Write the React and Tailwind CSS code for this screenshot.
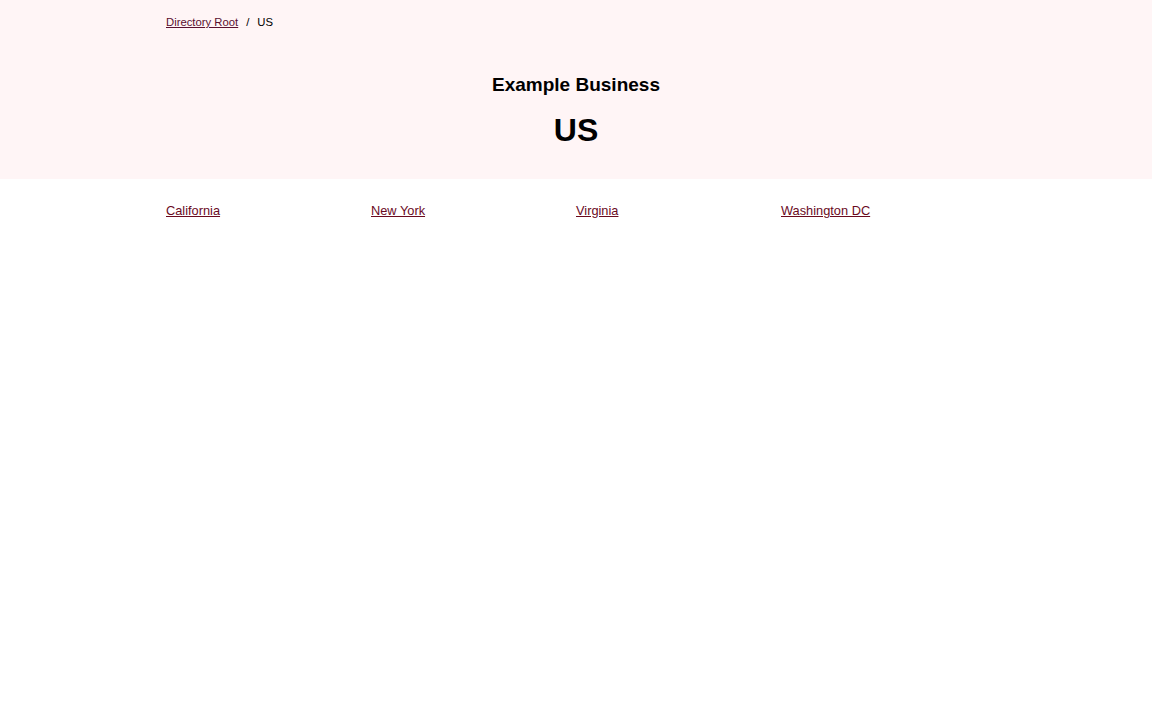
const STATES = ['California', 'New York', 'Virginia', 'Washington DC']

export default function App() {
  return (
    <div className="min-h-screen bg-white text-black" style={{ fontFamily: '"Liberation Sans", Arial, sans-serif' }}>
      <header className="bg-[#fff5f6]">
        <div className="mx-auto w-[820px] pt-[15px] pb-[30px]">
          <nav className="flex items-center text-[11.3px] leading-[14px]">
            <a href="#" className="text-[#5a1030] underline">Directory Root</a>
            <span className="mx-[8px]">/</span>
            <span>US</span>
          </nav>
          <div className="mt-[45px] text-center">
            <h2 className="text-[19px] font-bold leading-[22px]">Example Business</h2>
            <h1 className="mt-[16px] text-[32px] font-bold leading-[37px]">US</h1>
          </div>
        </div>
      </header>
      <main className="mx-auto grid w-[820px] grid-cols-4 pt-[24px] text-[12.8px] leading-[16px]">
        {STATES.map((s) => (
          <div key={s}>
            <a href="#" className="text-[#6a0a1e] underline">{s}</a>
          </div>
        ))}
      </main>
    </div>
  )
}
